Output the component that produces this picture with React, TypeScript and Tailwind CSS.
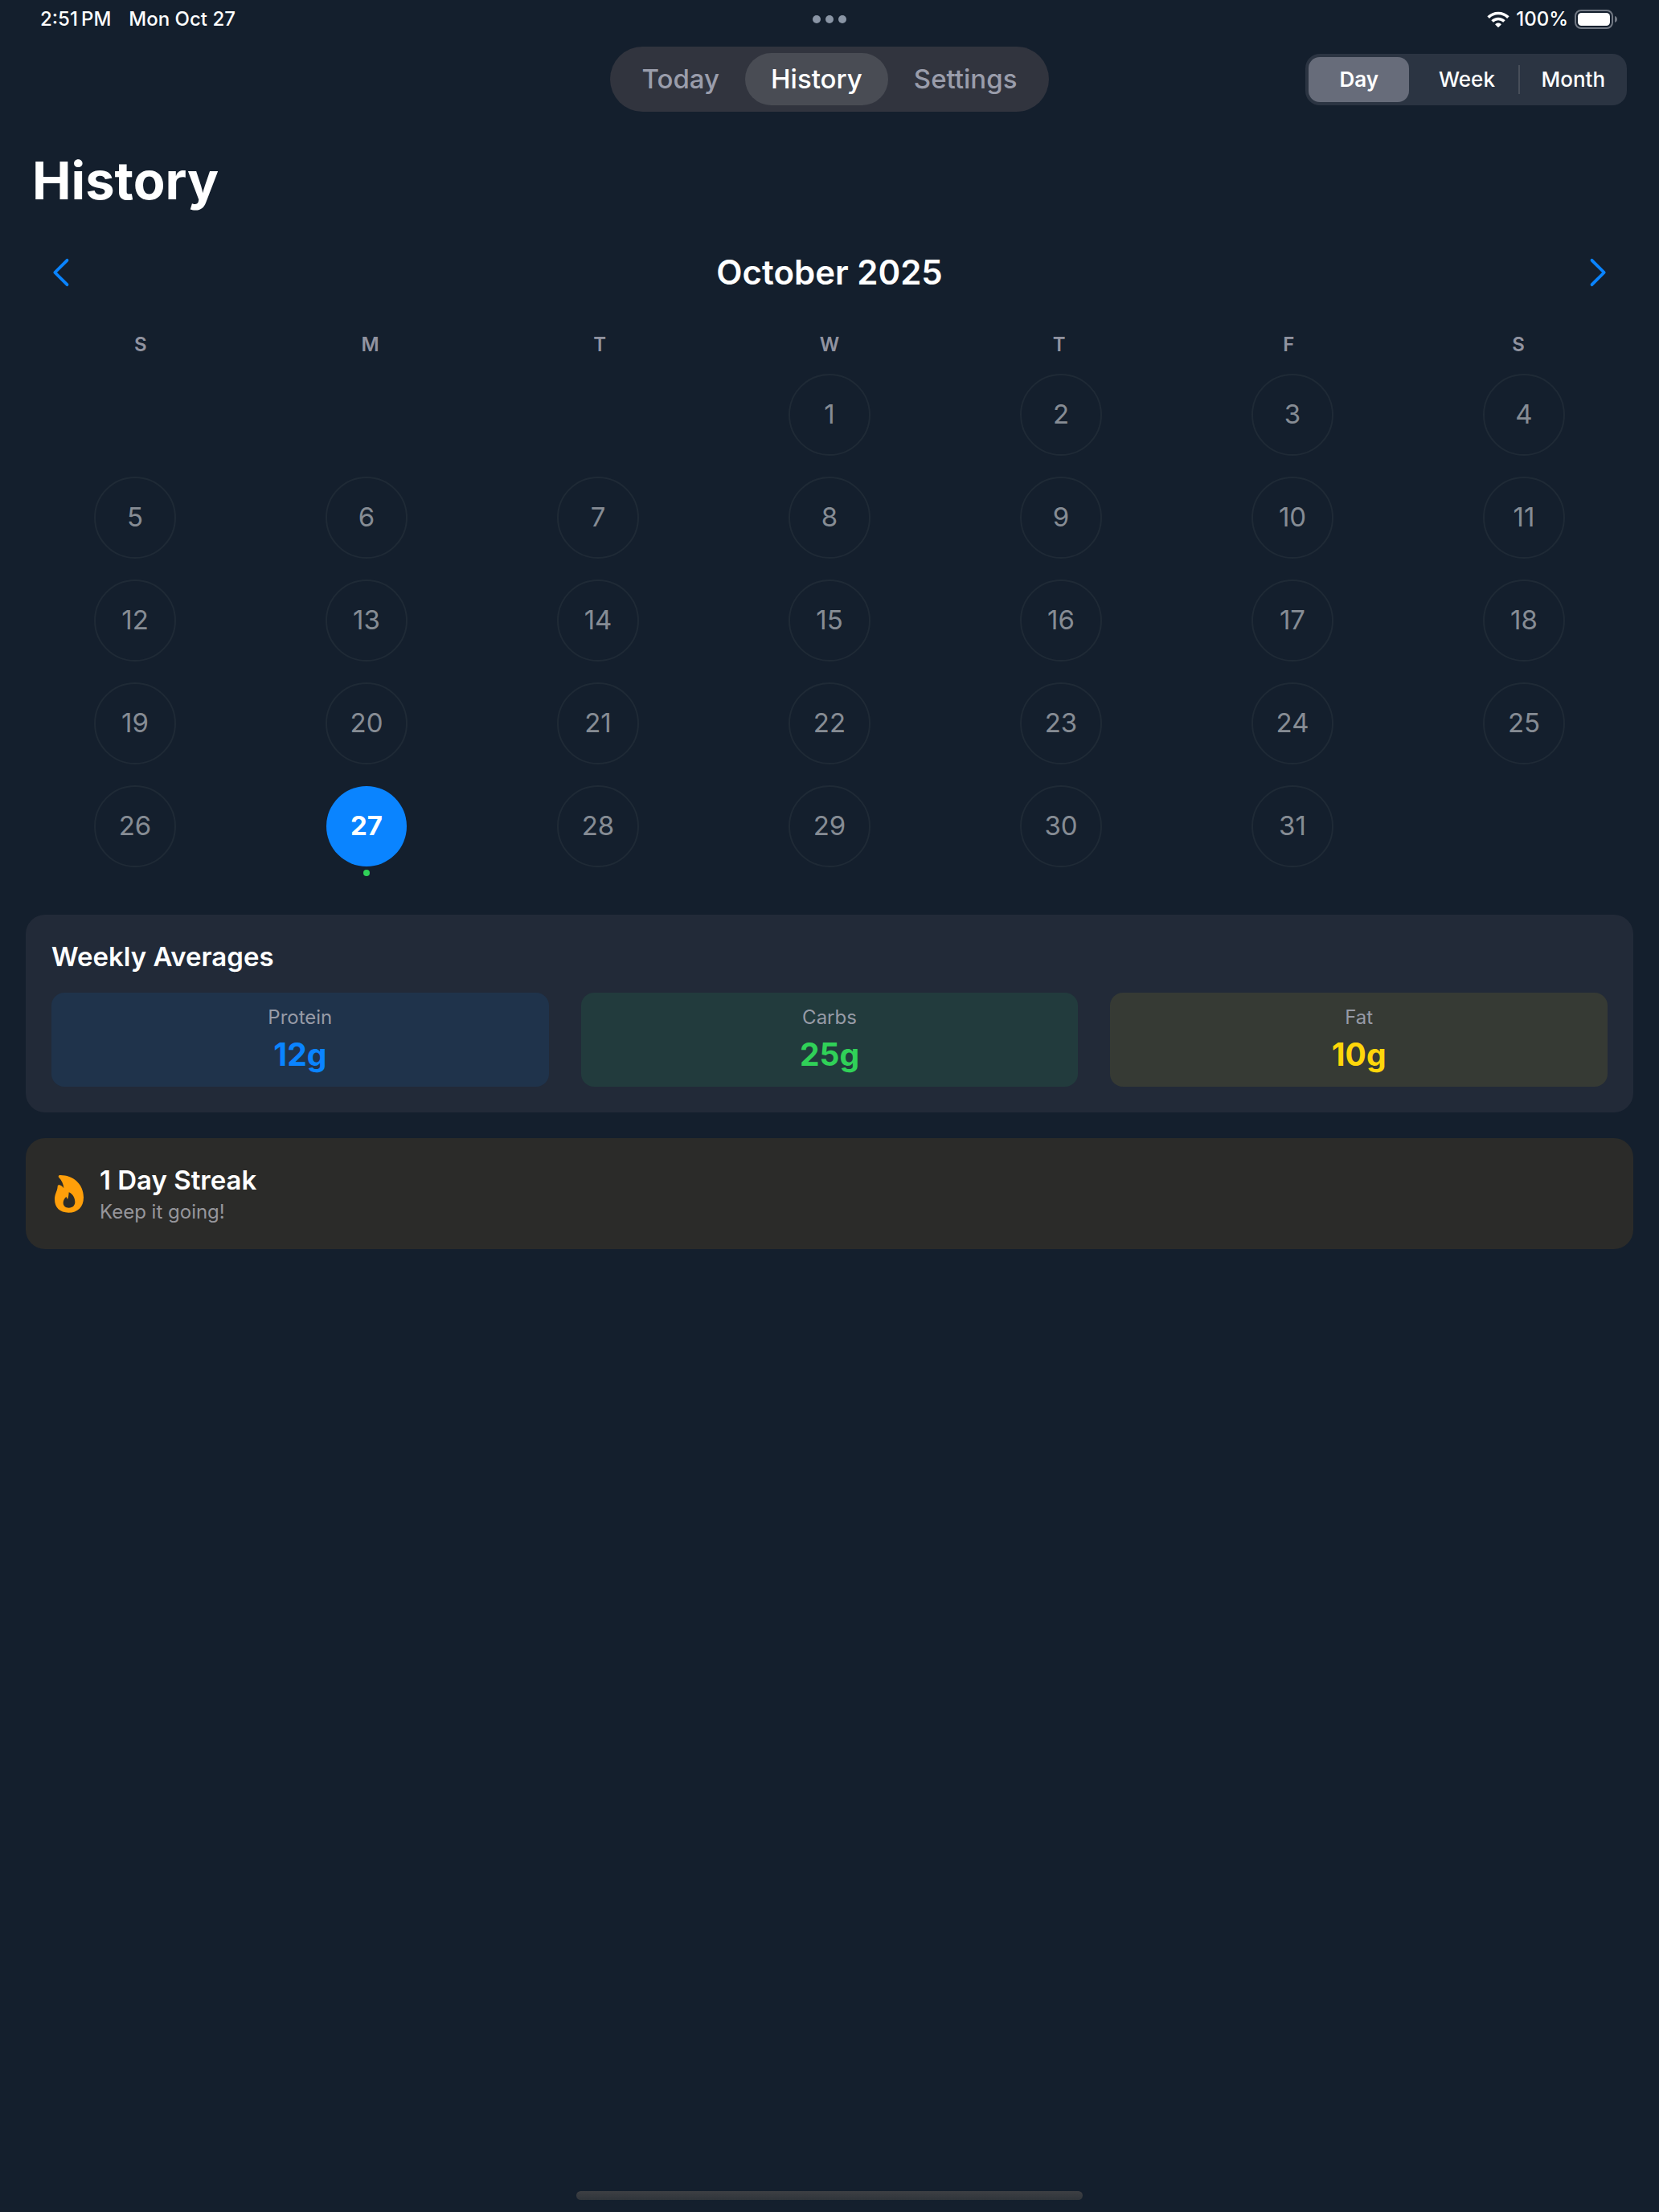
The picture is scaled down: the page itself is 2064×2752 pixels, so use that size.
import React, { useState } from "react";

const tabs = ["Today", "History", "Settings"];
const ranges = ["Day", "Week", "Month"];
const weekdays = ["S", "M", "T", "W", "T", "F", "S"];
const leadingBlanks = 3;
const daysInMonth = 31;
const loggedDays = [27];

const averages = [
  { label: "Protein", value: "12g", box: "bg-[#1f334b]", text: "text-[#0a84ff]" },
  { label: "Carbs", value: "25g", box: "bg-[#223b3d]", text: "text-[#30d158]" },
  { label: "Fat", value: "10g", box: "bg-[#363a34]", text: "text-[#ffd60a]" },
];

function WifiIcon() {
  return (
    <svg viewBox="747 40 84 63" className="h-[21px] w-7" fill="none" stroke="white" aria-hidden="true">
      <path d="M751.9 62.9a52.5 52.5 0 0 1 74.2 0" strokeWidth="11" />
      <path d="M766.7 77.7a31.5 31.5 0 0 1 44.6 0" strokeWidth="10.5" />
      <path
        d="M789 101l-10-10c-1.500-1.500-1.300-3 0-4 6-4.500 14-4.500 20 0 1.300 1 1.500 2.500 0 4z"
        fill="white"
        stroke="none"
      />
    </svg>
  );
}

function BatteryIcon() {
  return (
    <svg viewBox="0 0 54 24" className="h-6 w-[54px]" aria-hidden="true">
      <rect x="1" y="1" width="46" height="22" rx="7" fill="none" stroke="#727984" strokeWidth="2" />
      <rect x="4" y="4" width="40" height="16" rx="4.500" fill="white" />
      <path d="M50 8c2 .6 3 2.200 3 4s-1 3.400-3 4z" fill="#727984" />
    </svg>
  );
}

function Chevron({ flip = false }: { flip?: boolean }) {
  return (
    <svg
      viewBox="0 0 20 36"
      className="h-9 w-6"
      fill="none"
      stroke="#0a84ff"
      strokeWidth="3.800"
      strokeLinecap="round"
      strokeLinejoin="round"
      aria-hidden="true"
    >
      <path d={flip ? "M2.500 2.800 17.700 18 2.500 33.200" : "M17.500 2.800 2.300 18l15.200 15.200"} />
    </svg>
  );
}

function FlameIcon() {
  return (
    <svg viewBox="198 1024 120 147" className="h-[49px] w-11" fill="#ff9f0a" fillRule="evenodd" aria-hidden="true">
      <path d="M220 1036C216 1032 219 1027 225 1027C272 1027 312 1060 312 1110C312 1145 290 1167 256 1167C223 1167 204 1148 204 1117C204 1096 214 1088 215 1069C215 1064 219 1063 223 1064C229 1066 234 1070 238 1076C237 1060 230 1046 220 1036ZM257 1091C256 1101 256 1109 252 1117C250 1114 249 1111 247 1108C241 1113 236 1121 236 1130C236 1142 244 1149 257 1149C271 1149 280 1141 280 1127C280 1111 271 1097 257 1091Z" />
    </svg>
  );
}

export default function App() {
  const [tab, setTab] = useState("History");
  const [range, setRange] = useState("Day");
  const [selected, setSelected] = useState(27);

  return (
    <div className="flex min-h-screen flex-col bg-[#141f2d] font-['Inter',sans-serif] text-white">
      <div className="grid h-12 grid-cols-[1fr_auto_1fr] items-center pr-[51px] pl-[50px] text-[24px] leading-8 font-medium">
        <div className="flex gap-[22px]">
          <span>2:51{"\u2009"}PM</span>
          <span>Mon Oct 27</span>
        </div>
        <div className="flex gap-1.5">
          <span className="size-2.5 rounded-full bg-[#8a95a5]" />
          <span className="size-2.5 rounded-full bg-[#8a95a5]" />
          <span className="size-2.5 rounded-full bg-[#8a95a5]" />
        </div>
        <div className="flex items-center justify-end gap-2">
          <WifiIcon />
          <span>100%</span>
          <BatteryIcon />
        </div>
      </div>

      <header className="grid grid-cols-[1fr_auto_1fr] items-center px-10 pt-2.5">
        <nav className="col-start-2 flex rounded-full bg-[#31343e] p-2">
          {tabs.map((name) => (
            <button
              key={name}
              type="button"
              onClick={() => setTab(name)}
              className={`h-[65px] rounded-full px-8 text-[33px] font-medium ${
                tab === name ? "bg-[#494c54] text-white" : "text-[#9a9dab]"
              }`}
            >
              {name}
            </button>
          ))}
        </nav>
        <div className="grid h-16 w-[400px] grid-cols-3 justify-self-end rounded-[18px] bg-[#2b3442]">
          {ranges.map((name) => (
            <div key={name} className="flex items-center p-1">
              <button
                type="button"
                aria-pressed={range === name}
                onClick={() => setRange(name)}
                className={`h-14 grow rounded-[14px] text-[26px] ${
                  range === name ? "bg-[#676c7a] font-semibold" : "font-medium"
                }`}
              >
                {name}
              </button>
              {name === "Week" && <span className="-mr-1 h-9 w-0.5 bg-[#474e59]" />}
            </div>
          ))}
        </div>
      </header>

      <main className="flex flex-col px-8">
        <h1 className="mt-[46px] px-2 text-[65px] leading-20 font-bold">History</h1>

        <div className="mt-[46px] flex items-center justify-between px-8">
          <button type="button" aria-label="Previous month">
            <Chevron />
          </button>
          <h2 className="text-[42px] leading-14 font-semibold">October 2025</h2>
          <button type="button" aria-label="Next month">
            <Chevron flip />
          </button>
        </div>

        <div className="mt-[46px] grid grid-cols-7 text-center text-[24px] leading-8 font-semibold text-[#9193a0]">
          {weekdays.map((day, i) => (
            <span key={i}>{day}</span>
          ))}
        </div>

        <div className="mt-[21px] grid grid-cols-7 gap-4">
          {Array.from({ length: leadingBlanks }, (_, i) => (
            <span key={`blank-${i}`} />
          ))}
          {Array.from({ length: daysInMonth }, (_, i) => i + 1).map((day) => (
            <div key={day} className="flex h-28 flex-col items-center gap-1">
              <button
                type="button"
                onClick={() => setSelected(day)}
                className={`size-[100px] shrink-0 rounded-full text-[33px] ${
                  selected === day
                    ? "bg-[#0a84ff] font-bold text-white"
                    : "text-[#868c94] outline-2 -outline-offset-1 outline-[#1f2a36]"
                }`}
              >
                {day}
              </button>
              {loggedDays.includes(day) && <span className="size-2 rounded-full bg-[#30d158]" />}
            </div>
          ))}
        </div>

        <section className="mt-12 flex flex-col gap-6 rounded-3xl bg-[#222a38] p-8">
          <h3 className="text-[33px] leading-[41px] font-semibold">Weekly Averages</h3>
          <div className="grid grid-cols-3 gap-10">
            {averages.map((item) => (
              <div key={item.label} className={`flex flex-col items-center rounded-2xl py-4 ${item.box}`}>
                <span className="text-[24px] leading-[29px] text-[#979ba7]">{item.label}</span>
                <span className={`mt-2 text-[39px] leading-12 font-bold ${item.text}`}>{item.value}</span>
              </div>
            ))}
          </div>
        </section>

        <section className="mt-8 flex items-center gap-4 rounded-3xl bg-[#2b2b29] p-8">
          <FlameIcon />
          <div>
            <h3 className="text-[33px] leading-[41px] font-semibold">1 Day Streak</h3>
            <p className="mt-1 text-[24px] leading-[29px] text-[#96969b]">Keep it going!</p>
          </div>
        </section>
      </main>

      <div className="mt-auto mb-[15px] h-[11px] w-[630px] self-center rounded-full bg-linear-to-b from-[#3d3f43] to-[#30353b]" />
    </div>
  );
}
